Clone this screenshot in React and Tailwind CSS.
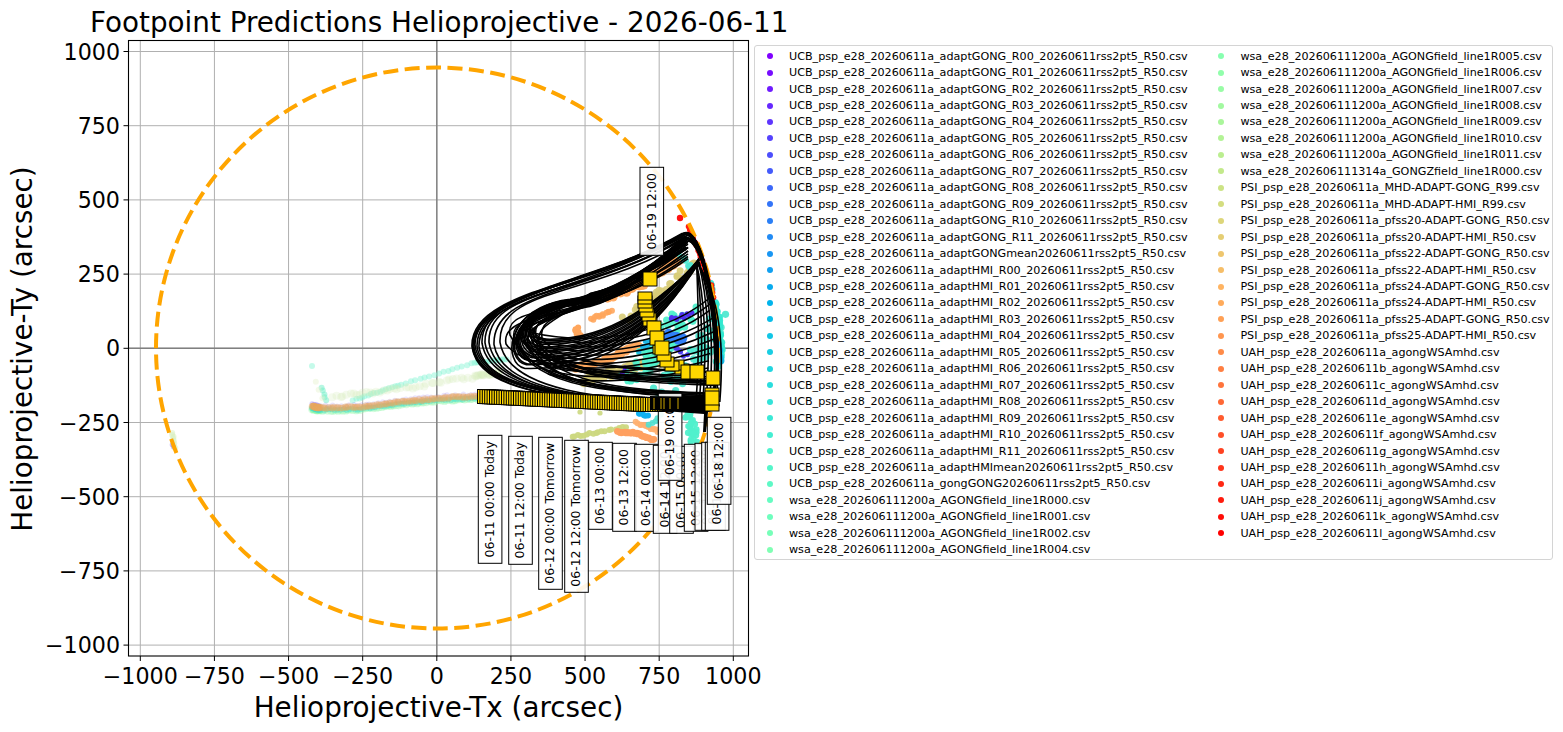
import React from 'react';

const font = '"DejaVu Sans", sans-serif';

const sx = (t) => 436.8 + t * 0.2965;
const sy = (t) => 348.3 - t * 0.2968;

// matplotlib rainbow colormap
function rainbow(x) {
  const c = (v) => Math.round(Math.min(1, Math.max(0, v)) * 255);
  return `rgb(${c(Math.abs(2 * x - 0.5))},${c(Math.sin(x * Math.PI))},${c(Math.cos((x * Math.PI) / 2))})`;
}

const leftNames = [
  ...Array.from({ length: 12 }, (_, i) => `UCB_psp_e28_20260611a_adaptGONG_R${String(i).padStart(2, '0')}_20260611rss2pt5_R50.csv`),
  'UCB_psp_e28_20260611a_adaptGONGmean20260611rss2pt5_R50.csv',
  ...Array.from({ length: 12 }, (_, i) => `UCB_psp_e28_20260611a_adaptHMI_R${String(i).padStart(2, '0')}_20260611rss2pt5_R50.csv`),
  'UCB_psp_e28_20260611a_adaptHMImean20260611rss2pt5_R50.csv',
  'UCB_psp_e28_20260611a_gongGONG20260611rss2pt5_R50.csv',
  'wsa_e28_202606111200a_AGONGfield_line1R000.csv',
  'wsa_e28_202606111200a_AGONGfield_line1R001.csv',
  'wsa_e28_202606111200a_AGONGfield_line1R002.csv',
  'wsa_e28_202606111200a_AGONGfield_line1R004.csv',
];

const rightNames = [
  'wsa_e28_202606111200a_AGONGfield_line1R005.csv',
  'wsa_e28_202606111200a_AGONGfield_line1R006.csv',
  'wsa_e28_202606111200a_AGONGfield_line1R007.csv',
  'wsa_e28_202606111200a_AGONGfield_line1R008.csv',
  'wsa_e28_202606111200a_AGONGfield_line1R009.csv',
  'wsa_e28_202606111200a_AGONGfield_line1R010.csv',
  'wsa_e28_202606111200a_AGONGfield_line1R011.csv',
  'wsa_e28_202606111314a_GONGZfield_line1R000.csv',
  'PSI_psp_e28_20260611a_MHD-ADAPT-GONG_R99.csv',
  'PSI_psp_e28_20260611a_MHD-ADAPT-HMI_R99.csv',
  'PSI_psp_e28_20260611a_pfss20-ADAPT-GONG_R50.csv',
  'PSI_psp_e28_20260611a_pfss20-ADAPT-HMI_R50.csv',
  'PSI_psp_e28_20260611a_pfss22-ADAPT-GONG_R50.csv',
  'PSI_psp_e28_20260611a_pfss22-ADAPT-HMI_R50.csv',
  'PSI_psp_e28_20260611a_pfss24-ADAPT-GONG_R50.csv',
  'PSI_psp_e28_20260611a_pfss24-ADAPT-HMI_R50.csv',
  'PSI_psp_e28_20260611a_pfss25-ADAPT-GONG_R50.csv',
  'PSI_psp_e28_20260611a_pfss25-ADAPT-HMI_R50.csv',
  ...'abcdefghijkl'.split('').map((l) => `UAH_psp_e28_20260611${l}_agongWSAmhd.csv`),
];

const ticks = [-1000, -750, -500, -250, 0, 250, 500, 750, 1000];
const tickText = (t) => (t < 0 ? `\u2212${-t}` : `${t}`);

// small seeded random so every render is the same
function makeRand(seed) {
  let s = seed;
  return () => {
    s = (s * 16807) % 2147483647;
    return s / 2147483647;
  };
}

// dots along a polyline, with some jitter
function strip(points, n, color, r, opacity, jitter, seed) {
  const rand = makeRand(seed * 7919);
  const out = [];
  for (let i = 0; i < n; i++) {
    const f = (i / Math.max(1, n - 1)) * (points.length - 1);
    const k = Math.min(points.length - 2, Math.floor(f));
    const u = f - k;
    const x = points[k][0] + (points[k + 1][0] - points[k][0]) * u + (rand() - 0.5) * jitter;
    const y = points[k][1] + (points[k + 1][1] - points[k][1]) * u + (rand() - 0.5) * jitter;
    out.push({ x, y, color, r, opacity });
  }
  return out;
}

const bandLine = (d) => [[312, 406 + d], [320, 408 + d], [360, 407 + d], [400, 402 + d], [440, 398 + d], [480, 396 + d]];

const dots = [
  // faint tracks on the left
  { x: 312, y: 366, color: '#7ff5d0', r: 3, opacity: 0.45 },
  ...strip([[322, 388], [326, 400]], 5, '#6ff0c8', 3, 0.5, 1, 2),
  ...strip([[353, 400], [400, 385], [473, 363], [507, 359]], 48, '#80f5d2', 3, 0.45, 1, 3),
  ...strip([[333, 397], [400, 389], [473, 377], [500, 372]], 60, '#d4ecb8', 4, 0.25, 3, 4),
  ...strip([[316, 382], [322, 398]], 3, '#e4f0c8', 3, 0.4, 1, 5),
  ...strip(bandLine(3), 80, '#90f5a8', 3.6, 0.35, 1.5, 6),
  ...strip(bandLine(2), 70, '#40e0d0', 3, 0.4, 1.2, 7),
  ...strip(bandLine(-2), 50, '#6040f0', 2.6, 0.14, 1.5, 8),
  ...strip(bandLine(0), 100, '#e8a860', 3.4, 0.4, 1.6, 9),
  ...strip([[172, 433], [175, 447]], 8, '#d8f0c0', 3, 0.5, 2, 10),
  ...strip([[172, 445], [174, 447]], 2, '#8a70f0', 2.5, 0.45, 1, 11),

  // under the loops
  ...strip([[575, 368], [600, 362], [640, 345]], 40, '#ffa65c', 4, 0.95, 3, 12),
  ...strip([[607, 298], [640, 284], [682, 258]], 45, '#ffa65c', 4.5, 0.95, 5, 13),
  ...strip([[590, 320], [612, 310]], 12, '#ffa65c', 3, 0.9, 3, 14),
  ...strip([[573, 328], [582, 333]], 6, '#ffa65c', 3, 1, 6, 15),
  ...strip([[583, 382], [620, 370], [653, 362], [690, 372]], 50, '#d8cc78', 4.5, 0.95, 5, 16),
  ...strip([[625, 320], [660, 292], [695, 264]], 30, '#d8cc78', 3.5, 0.9, 6, 17),
  ...strip([[630, 372], [660, 345], [690, 318]], 70, '#50f0cc', 3.6, 0.95, 24, 18),
  ...strip([[660, 392], [700, 360], [716, 320]], 60, '#50e8d0', 3.6, 0.95, 20, 19),
  ...strip([[640, 350], [650, 340]], 8, '#20b8e8', 2.5, 1, 4, 20),
  ...strip([[668, 335], [682, 340]], 14, '#3080f8', 4.5, 1, 5, 21),
  ...strip([[672, 320], [690, 315]], 10, '#5030f0', 2.5, 1, 5, 22),
  ...strip([[620, 376], [626, 368]], 5, '#6030f0', 2, 1, 2, 23),
  ...strip([[676, 348], [686, 356]], 6, '#5040f0', 2.5, 1, 4, 24),
  ...strip([[680, 258], [692, 268]], 8, '#50e8d0', 3, 0.9, 6, 25),

  // rim on the right
  ...strip([[710, 282], [718, 320], [721, 350], [718, 365]], 30, '#30e8d0', 3.6, 0.95, 4, 26),
  ...strip([[718, 345], [720, 360]], 8, '#10b8e8', 3.6, 1, 3, 27),
  ...strip([[688, 227], [697, 246], [705, 270], [708, 280]], 32, '#ff1a10', 2.6, 1, 1.5, 28),
  ...strip([[711, 285], [713, 297]], 4, '#ff1a10', 3, 1, 1, 29),
  { x: 680, y: 218, color: '#ff1010', r: 3.2, opacity: 1 },

  // below the track
  ...strip([[572, 437], [597, 432], [625, 427]], 18, '#ccd880', 3, 0.95, 2, 30),
  { x: 580, y: 412, color: '#ccd880', r: 2.6, opacity: 0.9 },
  { x: 600, y: 413, color: '#ccd880', r: 2.6, opacity: 0.9 },
  ...strip([[684, 408], [692, 425], [696, 440]], 28, '#50f0cc', 3.2, 0.95, 10, 31),
  ...strip([[638, 413], [648, 416]], 6, '#10b0f0', 3, 1, 2, 32),
  ...strip([[637, 422], [660, 432]], 14, '#ffb070', 3, 0.9, 3, 33),
  ...strip([[618, 432], [636, 433], [654, 440]], 22, '#ffa060', 3.4, 1, 1.5, 34),
  ...strip([[650, 424], [662, 416]], 5, '#50e0d0', 3, 0.9, 4, 35),
];

const rl = makeRand(424242);

function outerLoop(lx) {
  const j = lx - 472;
  const ly = 345 - j * 0.2 + rl() * 4;
  const by = 403 - rl() * 4;
  const tx = 686 - rl() * 4;
  const ty = 230 + j * 0.25 + rl() * 5;
  const tc = 285 + j * 0.4 + rl() * 6;
  return `M712 ${by} C600 ${by}, ${lx + 8} ${by - 3 - j * 0.3}, ${lx} ${ly} C${lx - 2} ${ly - 55}, 590 ${tc}, ${tx} ${ty} C${tx + 15} ${ty - 5}, ${716 - rl() * 6} 290, ${718 - rl() * 4} 340 C719 370, 716 395, 708 405`;
}

function innerLoop(lx) {
  const ly = 335 + rl() * 10;
  const by = 402 - rl() * 30;
  const ty = 233 + rl() * 26;
  const top = 292 + rl() * 16;
  return `M714 ${by} C640 ${by - 4}, ${lx + 20} ${by - 4}, ${lx} ${ly} C${lx - 4} ${ly - 20}, ${lx + 20} ${ly - 22}, 590 ${top} C630 ${top - 10}, 660 ${ty + 20}, 688 ${ty}`;
}

function eyeLoop(i) {
  const my = 338 + i * 1.9 + rl() * 2;
  const top = 306 - rl() * 7;
  const lx = 546 - i * 1.4;
  return `M${697 + rl() * 3} ${258 + rl() * 6} C660 ${298 + i * 2}, 612 ${my + 2}, ${lx} ${my} C${lx - 22} ${my - 4}, ${lx - 22} ${top + 6}, 570 ${top} C610 ${top - 6}, 650 268, 686 ${236 + rl() * 14}`;
}

function fanLine(i) {
  const y = 340 + i * 4.2;
  return `M${716 - rl() * 8} ${y - 44 + i * 3} C670 ${y - 8}, 600 ${y + 8}, ${528 + i * 2} ${y - 8}`;
}

function sideLine(i) {
  const x = 692 + i * 3.4;
  return `M${696 + rl() * 4} 262 C${x + 6} 300, ${x + 8} 350, ${x + 4} 402`;
}

const curves = [
  ...[472, 472.5, 473, 474, 475, 477, 479, 482, 485, 489, 494, 500].map((lx) => outerLoop(lx)),
  ...[506, 510, 514, 517, 519, 521, 523, 525, 527, 528, 530, 532, 534, 536, 539, 542].map((lx) => innerLoop(lx)),
  ...Array.from({ length: 16 }, (_, i) => eyeLoop(i)),
  ...Array.from({ length: 11 }, (_, i) => fanLine(i)),
  ...Array.from({ length: 8 }, (_, i) => sideLine(i)),
];

const labels = [
  { x: 478.3, y: 435.3, h: 128, text: '06-11 00:00 Today' },
  { x: 508.7, y: 436.3, h: 128, text: '06-11 12:00 Today' },
  { x: 538.7, y: 437.3, h: 152, text: '06-12 00:00 Tomorrow' },
  { x: 564.7, y: 440.3, h: 152, text: '06-12 12:00 Tomorrow' },
  { x: 588.7, y: 442.3, h: 87, text: '06-13 00:00' },
  { x: 612.7, y: 443.3, h: 88, text: '06-13 12:00' },
  { x: 634.7, y: 444.3, h: 87, text: '06-14 00:00' },
  { x: 653.3, y: 445.3, h: 88, text: '06-14 12:00' },
  { x: 669.7, y: 446.3, h: 87, text: '06-15 00:00' },
  { x: 684.3, y: 444.3, h: 87, text: '06-15 12:00' },
  { x: 695, y: 443.3, h: 87, text: '06-16 00:00' },
  { x: 701.7, y: 442.3, h: 88, text: '06-16 12:00' },
  { x: 705.3, y: 442.3, h: 88, text: '06-17 00:00' },
  { x: 707.3, y: 417.3, h: 87, text: '06-18 12:00' },
  { x: 658.3, y: 393.3, h: 87, text: '06-19 00:00' },
  { x: 640, y: 167.3, h: 88, text: '06-19 12:00' },
];

// bottom run of markers, left to right
const trackMarks = Array.from({ length: 78 }, (_, i) => ({
  x: 477.5 + i * 2.4,
  y: 389.5 + Math.min(1, i / 68) * 8,
}));

// stack of thin slices climbing back up on the right: [centre x, top y, height]
const upperMarks = [
  [712, 404, 7], [712, 388, 9], [697, 366, 8], [688, 366, 10], [682, 364, 10], [677, 360, 10], [672, 361, 10],
  [667, 357, 10], [664, 352, 9], [660, 345, 9], [650, 318, 8], [649, 313, 8], [647, 309, 8], [646, 304, 8],
  [645, 300, 8], [645, 296, 8], [645, 292, 8],
];
const bigMarks = [
  [650, 279], [654, 328], [657, 338], [662, 348], [688, 372], [697, 372], [713, 378], [712, 398],
];

function Plot() {
  return (
    <svg width="754" height="732" className="shrink-0 block overflow-visible" style={{ fontFamily: font }}>
      <text x="90" y="32" fontSize="27.8" fill="#000">Footpoint Predictions Helioprojective - 2026-06-11</text>

      {ticks.map((t) => (
        <g key={t}>
          <line x1={sx(t)} x2={sx(t)} y1="40.5" y2="656" stroke="#b0b0b0" strokeWidth="1" />
          <line x1="128.5" x2="748.5" y1={sy(t)} y2={sy(t)} stroke="#b0b0b0" strokeWidth="1" />
          <line x1={sx(t)} x2={sx(t)} y1="656" y2="661" stroke="#000" strokeWidth="1" />
          <line x1="123.5" x2="128.5" y1={sy(t)} y2={sy(t)} stroke="#000" strokeWidth="1" />
          <text x={sx(t)} y="683.5" fontSize="22.2" textAnchor="middle" fill="#000">{tickText(t)}</text>
          <text x="120" y={sy(t) + 8} fontSize="22.2" textAnchor="end" fill="#000">{tickText(t)}</text>
        </g>
      ))}
      <line x1={sx(0)} x2={sx(0)} y1="40.5" y2="656" stroke="#808080" strokeWidth="1.4" />
      <line x1="128.5" x2="748.5" y1={sy(0)} y2={sy(0)} stroke="#808080" strokeWidth="1.4" />

      {dots.map((d, i) => (
        <circle key={i} cx={d.x} cy={d.y} r={d.r} fill={d.color} fillOpacity={d.opacity} />
      ))}

      <ellipse cx="437" cy="348" rx="281" ry="280.5" fill="none" stroke="#ffa500" strokeWidth="4" strokeDasharray="15 6.5" />

      {curves.map((d, i) => (
        <path key={i} d={d} fill="none" stroke="#000" strokeWidth="1.6" />
      ))}

      {labels.map((l) => (
        <g key={l.text}>
          <rect x={l.x} y={l.y} width="23.6" height={l.h} fill="#fff" fillOpacity="0.9" stroke="#000" strokeWidth="1" />
          <text
            transform={`translate(${l.x + 11} ${l.y + l.h / 2}) rotate(-90)`}
            fontSize="12.5"
            textAnchor="middle"
            dominantBaseline="central"
            fill="#000"
          >
            {l.text}
          </text>
        </g>
      ))}

      {trackMarks.map((m, i) => (
        <rect key={i} x={m.x} y={m.y} width="11" height="14" fill="#ffd700" stroke="#000" strokeWidth="1" />
      ))}
      <path d="M650 396 L706 397 L720 405 L718 410 L708 412 L706 432 L703 432 L704 414 L650 410 Z" fill="#000" />
      {[654, 661, 664, 670, 678].map((x) => (
        <line key={x} x1={x} x2={x} y1="398" y2="409" stroke="#c9a400" strokeWidth="1" />
      ))}

      {upperMarks.map(([x, y, h], i) => (
        <rect key={i} x={x - 7} y={y} width="14" height={h} fill="#ffd700" stroke="#000" strokeWidth="1" />
      ))}
      {bigMarks.map(([x, y], i) => (
        <rect key={i} x={x - 7} y={y - 7} width="14" height="14" fill="#ffd700" stroke="#000" strokeWidth="1" />
      ))}

      <rect x="128.5" y="40.5" width="620" height="615.5" fill="none" stroke="#000" strokeWidth="1.1" />

      <text x="438.5" y="717" fontSize="27.8" textAnchor="middle" fill="#000">Helioprojective-Tx (arcsec)</text>
      <text transform="translate(32 349) rotate(-90)" fontSize="27.8" textAnchor="middle" fill="#000">Helioprojective-Ty (arcsec)</text>
    </svg>
  );
}

function LegendColumn({ names, start }) {
  return (
    <div className="flex flex-col">
      {names.map((name, i) => (
        <div key={name} className="flex items-center h-[16.46px]">
          <span
            className="w-[6px] h-[6px] rounded-full shrink-0 ml-[11.5px] mr-[16.5px]"
            style={{ backgroundColor: rainbow((start + i) / 60) }}
          />
          <span className="whitespace-nowrap text-[11.16px] leading-none text-black">{name}</span>
        </div>
      ))}
    </div>
  );
}

export default function App() {
  return (
    <div className="flex w-[1563px] h-[732px] overflow-hidden bg-white" style={{ fontFamily: font }}>
      <Plot />
      <div className="pt-[45px]">
        <div className="w-[799px] h-[515px] border border-[#d4d4d4] rounded-[3px] bg-white pt-[2px] grid grid-cols-[451.4px_1fr]">
          <LegendColumn names={leftNames} start={0} />
          <LegendColumn names={rightNames} start={31} />
        </div>
      </div>
    </div>
  );
}
